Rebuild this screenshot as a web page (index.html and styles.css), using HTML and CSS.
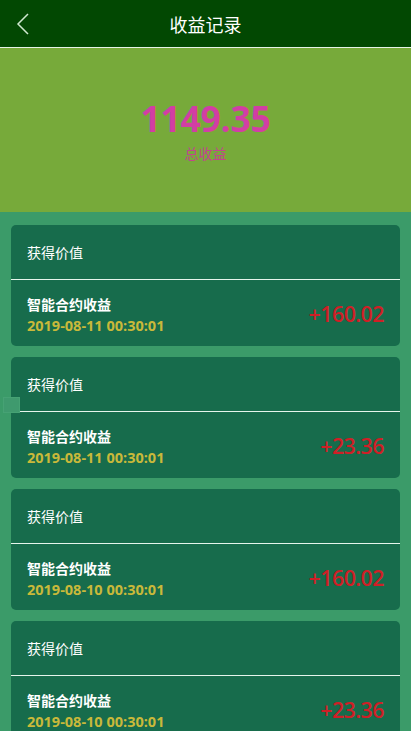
FILE: index.html
```html
<!DOCTYPE html>
<html lang="zh">
<head>
<meta charset="utf-8">
<link rel="stylesheet" href="styles.css">
</head>
<body>
<div class="page">
  <header class="topbar">
    <svg class="back" width="14" height="22" viewBox="0 0 14 22"><path d="M12 1 L2 11 L12 21" fill="none" stroke="#cfe8cf" stroke-width="1.5"/></svg>
    <div class="title">收益记录</div>
  </header>
  <section class="summary">
    <div class="total">1149.35</div>
    <div class="total-label">总收益</div>
  </section>
  <main class="list">
    <div class="card">
      <div class="card-head">获得价值</div>
      <div class="card-body">
        <div class="info">
          <div class="name">智能合约收益</div>
          <div class="date">2019-08-11 00:30:01</div>
        </div>
        <div class="amount">+160.02</div>
      </div>
    </div>
    <div class="card">
      <div class="card-head">获得价值</div>
      <div class="card-body">
        <div class="info">
          <div class="name">智能合约收益</div>
          <div class="date">2019-08-11 00:30:01</div>
        </div>
        <div class="amount">+23.36</div>
      </div>
    </div>
    <div class="card">
      <div class="card-head">获得价值</div>
      <div class="card-body">
        <div class="info">
          <div class="name">智能合约收益</div>
          <div class="date">2019-08-10 00:30:01</div>
        </div>
        <div class="amount">+160.02</div>
      </div>
    </div>
    <div class="card">
      <div class="card-head">获得价值</div>
      <div class="card-body">
        <div class="info">
          <div class="name">智能合约收益</div>
          <div class="date">2019-08-10 00:30:01</div>
        </div>
        <div class="amount">+23.36</div>
      </div>
    </div>
  </main>
  <div class="float-tab"></div>
</div>
</body>
</html>
```
FILE: styles.css
```css
* { box-sizing: border-box; }
html, body { margin: 0; padding: 0; }
body {
  font-family: "Open Sans", "Noto Sans CJK SC", sans-serif;
  background: #3b9b69;
  width: 411px;
  height: 731px;
  overflow: hidden;
}
.page { position: relative; }
.topbar {
  height: 48px;
  background: #024802;
  border-bottom: 1px solid #e6f2e6;
  display: flex;
  align-items: center;
  justify-content: center;
  position: relative;
}
.back { position: absolute; left: 16px; top: 13px; }
.title {
  color: #ffffff;
  font-size: 18px;
  font-family: "Noto Sans CJK SC", sans-serif;
}
.summary {
  height: 164px;
  background: #77aa3a;
  display: flex;
  flex-direction: column;
  align-items: center;
  padding-top: 48px;
}
.total {
  font-size: 35.5px;
  font-weight: 700;
  color: #d23ea4;
  line-height: 44px;
  letter-spacing: -0.3px;
}
.total-label {
  font-family: "Noto Sans CJK SC", sans-serif;
  font-size: 14px;
  color: #c2458e;
  line-height: 20px;
  margin-top: 3px;
}
.list {
  padding: 13px 11px 0;
  display: flex;
  flex-direction: column;
  gap: 11px;
}
.card {
  background: #176c4c;
  border-radius: 5px;
  overflow: hidden;
}
.card-head {
  height: 55px;
  border-bottom: 1px solid #e6f5ec;
  color: #ffffff;
  font-family: "Noto Sans CJK SC", sans-serif;
  font-size: 14px;
  display: flex;
  align-items: center;
  padding-left: 16px;
}
.card-body {
  height: 66px;
  display: flex;
  align-items: center;
  justify-content: space-between;
  padding: 0 16px;
}
.info { display: flex; flex-direction: column; padding-top: 3px; }
.name {
  color: #ffffff;
  font-family: "Noto Sans CJK SC", sans-serif;
  font-weight: 700;
  font-size: 14px;
  line-height: 22px;
}
.date {
  color: #c9b93a;
  font-weight: 700;
  font-size: 14.5px;
  line-height: 22px;
}
.amount {
  color: #cf1f26;
  font-size: 21.5px;
  font-weight: 600;
  line-height: 28px;
  padding-top: 2px;
  letter-spacing: -0.6px;
}
.float-tab {
  position: absolute;
  left: 3px;
  top: 397px;
  width: 17px;
  height: 16px;
  background: #3f9a6e;
  border: 1px solid #46a274;
}
```
